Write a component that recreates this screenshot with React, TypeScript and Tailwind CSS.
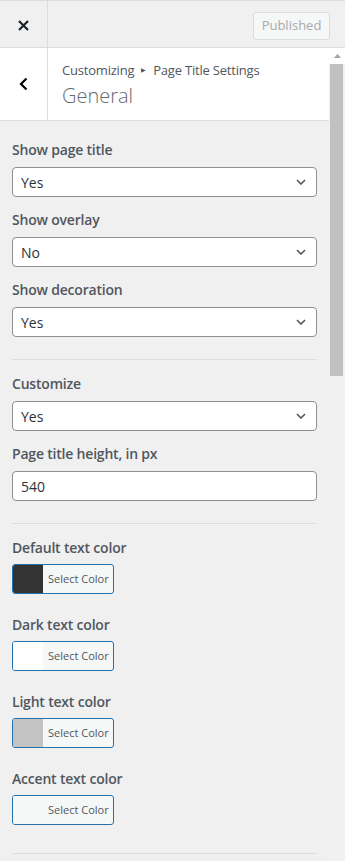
const font = { fontFamily: '"Open Sans", "Noto Sans", sans-serif' }

const Chevron = () => (
  <svg width="10" height="6" viewBox="0 0 10 6" className="text-[#50575e]">
    <path d="M1 1l4 4 4-4" fill="none" stroke="currentColor" strokeWidth="1.6" />
  </svg>
)

const SelectField = ({ label, value }: { label: string; value: string }) => (
  <div className="mb-[13px]">
    <div className="mb-[8px] text-[14px] font-semibold leading-[19px] tracking-[-0.2px] text-[#50575e]">{label}</div>
    <div className="flex h-[30px] items-center justify-between rounded-[4px] border border-[#8c8f94] bg-white pl-[8px] pr-[10px]">
      <span className="text-[14px] text-[#2c3338]">{value}</span>
      <Chevron />
    </div>
  </div>
)

const ColorField = ({ label, swatch }: { label: string; swatch: string }) => (
  <div className="mb-[21px]">
    <div className="mb-[7px] text-[14px] font-semibold leading-[19px] tracking-[-0.2px] text-[#50575e]">{label}</div>
    <div className="flex h-[30px] w-[102px] overflow-hidden rounded-[3px] border border-[#2271b1] bg-[#f6f7f7]">
      <div className="w-[30px]" style={{ background: swatch }} />
      <div className="flex flex-1 items-center pl-[5px] text-[11px] text-[#50575e]">Select Color</div>
    </div>
  </div>
)

const Divider = () => <div className="h-px bg-[#dcdcde]" />

export default function App() {
  return (
    <div className="flex h-[861px] w-[345px] flex-col overflow-hidden bg-[#f0f0f1]" style={font}>
      {/* top bar */}
      <div className="flex h-[48px] shrink-0 border-b border-t border-[#dcdcde] bg-[#f0f0f1]">
        <div className="flex w-[48px] items-center justify-center border-r border-[#dcdcde] pt-[3px]">
          <svg width="11" height="11" viewBox="0 0 11 11">
            <path d="M1 1l9 9M10 1l-9 9" stroke="#1d2327" strokeWidth="2.2" />
          </svg>
        </div>
        <div className="flex flex-1 items-start justify-end pr-[15px] pt-[11px]">
          <div className="flex h-[28px] w-[77px] items-center justify-center rounded-[3px] border border-[#dcdcde] bg-[#f6f7f7] text-[13px] text-[#a7aaad]">
            Published
          </div>
        </div>
      </div>

      <div className="flex min-h-0 flex-1">
        <div className="flex w-[329px] flex-col">
          {/* section header */}
          <div className="flex h-[73px] shrink-0 border-b border-[#dcdcde] bg-white">
            <div className="flex w-[48px] items-center justify-center border-r border-[#dcdcde]">
              <svg width="9" height="14" viewBox="0 0 9 14">
                <path d="M7.5 1.5L2 7l5.5 5.5" fill="none" stroke="#000" strokeWidth="2.2" />
              </svg>
            </div>
            <div className="flex flex-col justify-center pl-[14px]">
              <div className="flex items-center text-[13px] leading-[18px] tracking-[-0.2px] text-[#50575e]">
                Customizing
                <span className="mx-[7px] text-[6px] text-[#50575e]">▶</span>
                Page Title Settings
              </div>
              <div className="mt-[5px] text-[20px] font-light leading-[24px] text-[#646970]">General</div>
            </div>
          </div>

          {/* controls */}
          <div className="px-[12px] pt-[19px]">
            <SelectField label="Show page title" value="Yes" />
            <SelectField label="Show overlay" value="No" />
            <SelectField label="Show decoration" value="Yes" />
            <div className="mb-[14px] pt-[9px]">
              <Divider />
            </div>
            <SelectField label="Customize" value="Yes" />
            <div className="mb-[22px]">
              <div className="mb-[8px] text-[14px] font-semibold leading-[19px] tracking-[-0.2px] text-[#50575e]">Page title height, in px</div>
              <div className="flex h-[30px] items-center rounded-[4px] border border-[#8c8f94] bg-white pl-[8px] text-[14px] text-[#2c3338]">
                540
              </div>
            </div>
            <div className="mb-[14px]">
              <Divider />
            </div>
            <ColorField label="Default text color" swatch="#333333" />
            <ColorField label="Dark text color" swatch="#ffffff" />
            <ColorField label="Light text color" swatch="#c3c3c3" />
            <ColorField label="Accent text color" swatch="#f6f7f7" />
            <div className="pt-[7px]">
              <Divider />
            </div>
          </div>
        </div>

        {/* scrollbar */}
        <div className="flex w-[16px] flex-col bg-[#f1f1f1]">
          <div className="flex h-[16px] items-center justify-center bg-white">
            <svg width="7" height="4" viewBox="0 0 7 4">
              <path d="M0 4L3.5 0 7 4z" fill="#a3a3a3" />
            </svg>
          </div>
          <div className="ml-px mr-[2px] h-[312px] bg-[#c1c1c1]" />
        </div>
      </div>
    </div>
  )
}
